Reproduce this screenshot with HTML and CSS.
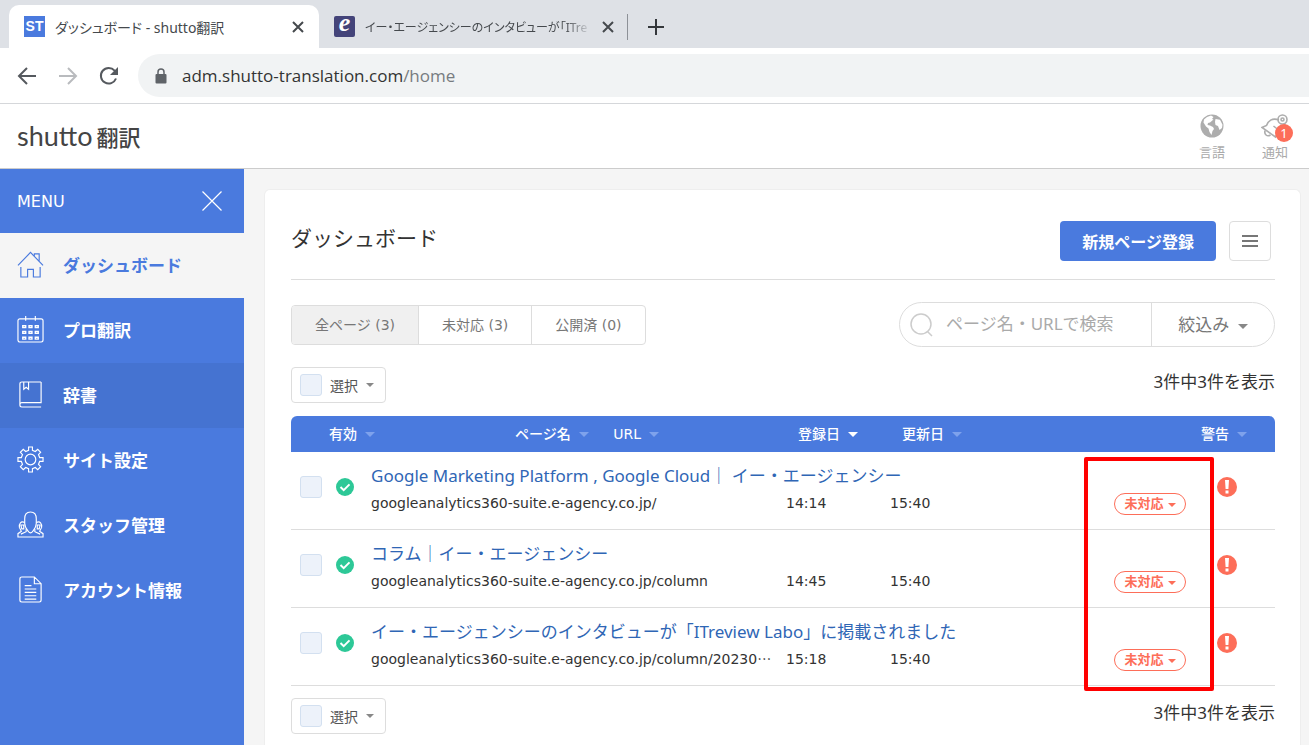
FILE: index.html
```
<!DOCTYPE html>
<html lang="ja">
<head>
  <meta charset="UTF-8">
  <meta name="viewport" content="width=device-width, initial-scale=1.0">
  <title>ダッシュボード - shutto翻訳</title>
  <link rel="stylesheet" href="styles.css">
</head>

<body>
  <!-- ブラウザ -->
  <div class="browser">
    <div class="tabs">
      <div class="tab active">
        <span class="favicon st">ST</span>
        <span class="tab-title">ダッシュボード - shutto翻訳</span>
        <button class="tab-close" aria-label="タブを閉じる"><svg width="12" height="12" viewBox="0 0 12 12"><path d="M1 1l10 10M11 1L1 11"/></svg></button>
      </div>
      <div class="tab">
        <span class="favicon ea">e</span>
        <span class="tab-title fade">イー・エージェンシーのインタビューが「ITre</span>
        <button class="tab-close" aria-label="タブを閉じる"><svg width="12" height="12" viewBox="0 0 12 12"><path d="M1 1l10 10M11 1L1 11"/></svg></button>
      </div>
      <button class="tab-new" aria-label="新しいタブ"><svg width="16" height="16" viewBox="0 0 16 16"><path d="M8 0v16M0 8h16"/></svg></button>
    </div>
    <div class="toolbar">
      <button aria-label="戻る"><svg width="20" height="20" viewBox="0 0 20 20"><path d="M19 10H2M10 2l-8 8 8 8"/></svg></button>
      <button class="disabled" aria-label="進む"><svg width="20" height="20" viewBox="0 0 20 20"><path d="M1 10h17M10 2l8 8-8 8"/></svg></button>
      <button aria-label="再読み込み"><svg width="20" height="20" viewBox="0 0 20 20"><path d="M17 12.5A7.8 7.8 0 1 1 15.6 4.6l1.4 1.6"/><path class="solid" d="M19 1v8h-8z"/></svg></button>
      <div class="address">
        <svg width="12" height="16" viewBox="0 0 12 16"><rect x="0.5" y="6" width="11" height="9.5" rx="1" fill="#5f6368"/><path d="M3 6V4a3 3 0 0 1 6 0v2" fill="none" stroke="#5f6368" stroke-width="1.5"/></svg>
        <span>adm.shutto-translation.com<span class="path">/home</span></span>
      </div>
    </div>
  </div>

  <header class="header">
    <a href="#" class="logo">shutto<span>翻訳</span></a>
    <div class="header-menu">
      <button>
        <svg width="24" height="24" viewBox="0 0 24 24"><circle cx="12" cy="12" r="11.5" fill="#adadad"/><path fill="#fff" d="M4 5.500L7 3l4-1.500 2.500 1.500-1.500 2 1.500.5-3.500 3-2 .5L7.500 11l2.500.5 3 1.500 1 2-1.500 2-1 4-2-3-1-3.500L6 12.500 3.500 8.500zM15.500 5l4.500.8 2.500 5-.5 3.200-2.500 2-1.500-4-2.500-1-.5-3z"/></svg>
        <span>言語</span>
      </button>
      <button class="notice">
        <svg width="28" height="26" viewBox="0 0 28 26" fill="none" stroke="#adadad" stroke-width="1.6"><circle cx="21.500" cy="5.500" r="4.500"/><circle cx="21.500" cy="5.500" r="1.500"/><path d="M18 6C11 3.500 7 7 5.500 11.500L1 13.500l13.500 9.500 2-3M12.500 12l5 4M24 9.500l-1 7"/><path d="M4 16.500c-1 4 2 6.500 5.500 4.500"/></svg>
        <span>通知</span>
        <span class="badge">1</span>
      </button>
    </div>
  </header>

  <div class="layout">
    <nav class="sidebar">
      <div class="menu-title">MENU
        <button aria-label="メニューを閉じる"><svg width="20" height="20" viewBox="0 0 20 20"><path d="M0.500.5l19 19M19.500.5l-19 19"/></svg></button>
      </div>
      <a href="#" class="current">
        <svg viewBox="0 0 28 28"><path d="M1 15L14 1.500 27 15M4 16.500V27h7v-8h6v8h7V16.500M18 5V3h5v7"/></svg>
        ダッシュボード</a>
      <a href="#">
        <svg viewBox="0 0 28 28"><rect x="1" y="3" width="26" height="24" rx="2"/><path d="M9 0v5M19 0v5"/><g stroke-width="1.5"><path d="M6 10h3v2H6zM12.500 10h3v2h-3zM19 10h3v2h-3zM6 16h3v2H6zM12.500 16h3v2h-3zM19 16h3v2h-3zM6 22h3v2H6zM12.500 22h3v2h-3zM19 22h3v2h-3z"/></g></svg>
        プロ翻訳</a>
      <a href="#" class="hover">
        <svg viewBox="0 0 28 28"><path d="M25 1H5a2 2 0 0 0-2 2v22a2 2 0 0 0 2 2h20M25 1v21.500H5a2 2 0 0 0-2 2M7 1v7.500l2.500-2 2.500 2V1"/></svg>
        辞書</a>
      <a href="#">
        <svg viewBox="0 0 28 28"><circle cx="14" cy="14" r="5.500"/><path d="M12 1h4v3.500l3 1.200L21.500 3.500l3 3L22.300 9l1.200 3H27v4h-3.500l-1.200 3 2.200 2.500-3 3L19 22.300l-3 1.200V27h-4v-3.500l-3-1.200-2.500 2.200-3-3L5.700 19l-1.200-3H1v-4h3.500l1.200-3-2.200-2.500 3-3L9 5.700l3-1.200z"/></svg>
        サイト設定</a>
      <a href="#">
        <svg viewBox="0 0 28 28"><path d="M14 1C9.500 1 8 4 8 8v5c0 4 3 7 4 8.500 1 1.500 3 1.500 4 0 1-1.500 4-4.500 4-8.500V8c0-4-1.500-7-6-7z"/><path d="M8 12c-4-2-6 1-5.500 5l2 4L1 23.500V27h26v-3.500L23.500 21l2-4c.5-4-1.500-7-5.500-5M9.500 18.500v3L4 24M18.500 18.500v3L24 24"/><path d="M4 14.500h3v4H5zM24 14.500h-3v4h2z"/></svg>
        スタッフ管理</a>
      <a href="#">
        <svg viewBox="0 0 28 28"><path d="M18 1H5a2 2 0 0 0-2 2v22a2 2 0 0 0 2 2h18a2 2 0 0 0 2-2V8zM18 1v7h7M8 10h7M8 13.500h12M8 17h12M8 20.500h12M8 24h12"/></svg>
        アカウント情報</a>
    </nav>

    <main class="main">
      <div class="panel">
        <div class="panel-head">
          <h1>ダッシュボード</h1>
          <button class="btn-primary">新規ページ登録</button>
          <button class="btn-menu" aria-label="メニュー"><svg width="16" height="12" viewBox="0 0 16 12"><path d="M0 1h16M0 6h16M0 11h16"/></svg></button>
        </div>

        <div class="filters">
          <div class="segment">
            <button class="on">全ページ (3)</button>
            <button>未対応 (3)</button>
            <button>公開済 (0)</button>
          </div>
          <form class="search">
            <label for="q"><svg width="24" height="24" viewBox="0 0 24 24"><circle cx="11" cy="11" r="10"/><path d="M17.500 18.500L22 23"/></svg></label>
            <input type="text" id="q" aria-label="検索" placeholder="ページ名・URLで検索">
            <button type="button">絞込み <i class="caret"></i></button>
          </form>
        </div>

        <div class="selection">
          <div class="select-box">
            <input type="checkbox" id="all-top">
            <label for="all-top">選択</label>
            <i class="caret"></i>
          </div>
          <span>3件中3件を表示</span>
        </div>

        <div class="table-wrap">
          <table>
            <colgroup>
              <col class="col-check">
              <col class="col-valid">
              <col class="col-page">
              <col class="col-date">
              <col>
              <col class="col-status">
              <col class="col-warn">
            </colgroup>
            <thead>
              <tr>
                <th></th>
                <th>有効 <i class="caret"></i></th>
                <th class="th-page">ページ名 <i class="caret"></i><span class="th-url">URL <i class="caret"></i></span></th>
                <th class="th-date">登録日 <i class="caret sorted"></i></th>
                <th class="th-date">更新日 <i class="caret"></i></th>
                <th></th>
                <th>警告 <i class="caret"></i></th>
              </tr>
            </thead>
            <tbody>
              <tr>
                <td class="mark check"><input type="checkbox" aria-label="選択"></td>
                <td class="mark valid"><svg width="18" height="18" viewBox="0 0 18 18"><circle cx="9" cy="9" r="9" fill="#2dc897"/><path d="M4.500 9l3.200 3.200 5.800-5.800" fill="none" stroke="#fff" stroke-width="2"/></svg></td>
                <td class="page"><a href="#">Google Marketing Platform , Google Cloud｜ イー・エージェンシー</a>googleanalytics360-suite.e-agency.co.jp/</td>
                <td>14:14</td>
                <td>15:40</td>
                <td class="status"><button>未対応 <i class="caret"></i></button></td>
                <td class="mark warn"><svg width="20" height="20" viewBox="0 0 20 20"><circle cx="10" cy="10" r="10" fill="#fd6e59"/><path d="M8 3h4l-.6 9H8.600zM8.500 13.500h3v3h-3z" fill="#fff"/></svg></td>
              </tr>
              <tr>
                <td class="mark check"><input type="checkbox" aria-label="選択"></td>
                <td class="mark valid"><svg width="18" height="18" viewBox="0 0 18 18"><circle cx="9" cy="9" r="9" fill="#2dc897"/><path d="M4.500 9l3.200 3.200 5.800-5.800" fill="none" stroke="#fff" stroke-width="2"/></svg></td>
                <td class="page"><a href="#">コラム｜イー・エージェンシー</a>googleanalytics360-suite.e-agency.co.jp/column</td>
                <td>14:45</td>
                <td>15:40</td>
                <td class="status"><button>未対応 <i class="caret"></i></button></td>
                <td class="mark warn"><svg width="20" height="20" viewBox="0 0 20 20"><circle cx="10" cy="10" r="10" fill="#fd6e59"/><path d="M8 3h4l-.6 9H8.600zM8.500 13.500h3v3h-3z" fill="#fff"/></svg></td>
              </tr>
              <tr>
                <td class="mark check"><input type="checkbox" aria-label="選択"></td>
                <td class="mark valid"><svg width="18" height="18" viewBox="0 0 18 18"><circle cx="9" cy="9" r="9" fill="#2dc897"/><path d="M4.500 9l3.200 3.200 5.800-5.800" fill="none" stroke="#fff" stroke-width="2"/></svg></td>
                <td class="page"><a href="#">イー・エージェンシーのインタビューが「ITreview Labo」に掲載されました</a>googleanalytics360-suite.e-agency.co.jp/column/20230<span class="more">…</span></td>
                <td>15:18</td>
                <td>15:40</td>
                <td class="status"><button>未対応 <i class="caret"></i></button></td>
                <td class="mark warn"><svg width="20" height="20" viewBox="0 0 20 20"><circle cx="10" cy="10" r="10" fill="#fd6e59"/><path d="M8 3h4l-.6 9H8.600zM8.500 13.500h3v3h-3z" fill="#fff"/></svg></td>
              </tr>
            </tbody>
          </table>
          <div class="highlight"></div>
        </div>

        <div class="selection">
          <div class="select-box">
            <input type="checkbox" id="all-bottom">
            <label for="all-bottom">選択</label>
            <i class="caret"></i>
          </div>
          <span>3件中3件を表示</span>
        </div>
      </div>
    </main>
  </div>
</body>

</html>
```
FILE: styles.css
```
* {
  box-sizing: border-box;
}
body {
  margin: 0;
  min-height: 100vh;
  display: flex;
  flex-direction: column;
  font-family: "Noto Sans", "Noto Sans CJK JP", sans-serif;
  font-size: 17px;
  color: #333;
  background: #f5f5f5;
}
button, input {
  font-family: inherit;
}
button {
  padding: 0;
  border: 0;
  background: none;
  cursor: pointer;
}
a {
  text-decoration: none;
}
svg {
  display: block;
  flex-shrink: 0;
}

/* ブラウザ */
.browser {
  background: #fff;
  border-bottom: 1px solid #d5d7da;
}
.tabs {
  display: flex;
  align-items: stretch;
  height: 48px;
  padding: 5px 0 0 9px;
  background: #dee1e6;
}
.tab {
  display: flex;
  align-items: center;
  width: 310px;
  padding: 0 15px;
  gap: 10px;
  color: #45494d;
  font-size: 14px;
}
.tab.active {
  background: #fff;
  border-radius: 10px 10px 0 0;
}
.favicon {
  width: 21px;
  height: 21px;
  flex-shrink: 0;
  color: #fff;
  text-align: center;
}
.favicon.st {
  background: #4a7ade;
  font: bold 14px/21px "Liberation Sans", sans-serif;
}
.favicon.ea {
  background: #44447a;
  border-radius: 2px;
  font: italic bold 26px/14px "Liberation Serif", serif;
}
.tab-title {
  flex: 1;
  white-space: nowrap;
  font-feature-settings: "palt";
}
.tab-title.fade {
  font-size: 12px;
  -webkit-mask-image: linear-gradient(to right, #000 88%, transparent);
  mask-image: linear-gradient(to right, #000 88%, transparent);
}
.tab-close path {
  stroke: #45494d;
  stroke-width: 2;
}
.tab-new {
  align-self: center;
  height: 26px;
  padding: 0 20px;
  margin-left: -2px;
  border-left: 1px solid #8d9197;
}
.tab-new path {
  stroke: #34373b;
  stroke-width: 2;
}
.toolbar {
  display: flex;
  align-items: center;
  gap: 21px;
  padding: 6px 0 6px 17px;
}
.toolbar button path {
  fill: none;
  stroke: #55595e;
  stroke-width: 2;
}
.toolbar button .solid {
  fill: #55595e;
  stroke: none;
}
.toolbar .disabled path {
  stroke: #b9bbbe;
}
.address {
  flex: 1;
  display: flex;
  align-items: center;
  gap: 15px;
  height: 43px;
  margin-left: -2px;
  padding-left: 17px;
  border-radius: 22px 0 0 22px;
  background: #f1f3f4;
  font-family: "Open Sans", sans-serif;
  font-size: 17px;
}
.address .path {
  color: #777b80;
}

/* ヘッダー */
.header {
  display: flex;
  align-items: center;
  justify-content: space-between;
  height: 65px;
  padding: 0 20px 0 17px;
  background: #fff;
  border-bottom: 1px solid #ccc;
}
.logo {
  display: flex;
  align-items: baseline;
  gap: 4px;
  color: #444;
  font-family: Lato, sans-serif;
  font-size: 27px;
  line-height: 30px;
}
.logo span {
  font-family: "Noto Sans CJK JP", sans-serif;
  font-size: 22px;
  font-weight: 500;
}
.header-menu {
  display: flex;
  gap: 36px;
}
.header-menu button {
  position: relative;
  display: flex;
  flex-direction: column;
  align-items: center;
  justify-content: space-between;
  height: 48px;
  margin-top: 4px;
  color: #aaa;
  font-size: 13px;
  line-height: 20px;
}
.badge {
  position: absolute;
  top: 10px;
  right: -4px;
  width: 18px;
  height: 18px;
  border-radius: 9px;
  background: #fd6e59;
  color: #fff;
  font-size: 13px;
  line-height: 18px;
}

/* サイドバー */
.layout {
  flex: 1;
  display: flex;
}
.sidebar {
  width: 244px;
  flex-shrink: 0;
  background: #4a7ade;
}
.menu-title {
  display: flex;
  align-items: center;
  justify-content: space-between;
  height: 64px;
  padding: 0 22px 0 17px;
  color: #fff;
  font-family: "DejaVu Sans", sans-serif;
  font-size: 16px;
}
.menu-title path {
  stroke: #fff;
  stroke-width: 1.2;
}
.sidebar a {
  display: flex;
  align-items: center;
  gap: 19px;
  height: 65px;
  padding: 0 0 2px 17px;
  color: #fff;
  font-weight: bold;
}
.sidebar a svg {
  width: 27px;
  height: 27px;
  fill: none;
  stroke: currentColor;
  stroke-width: 1.2;
}
.sidebar .current {
  background: #f5f5f5;
  color: #4a7ade;
}
.sidebar .hover {
  background: #4573d1;
}

/* メイン */
.main {
  flex: 1;
  display: flex;
  padding: 20px 8px 0 20px;
}
.panel {
  flex: 1;
  min-width: 0;
  padding: 31px 25px 8px 26px;
  border: 1px solid #eee;
  border-bottom: 0;
  border-radius: 6px 6px 0 0;
  background: #fff;
}
.panel-head {
  display: flex;
  align-items: center;
  padding: 0 4px 18px 0;
  border-bottom: 1px solid #ddd;
}
h1 {
  flex: 1;
  margin: 0;
  padding-bottom: 6px;
  font-size: 21px;
  font-weight: normal;
  line-height: 34px;
}
.btn-primary {
  height: 40px;
  padding: 0 22px;
  border-radius: 4px;
  background: #4a7ade;
  color: #fff;
  font-size: 16px;
  font-weight: bold;
}
.btn-menu {
  display: flex;
  align-items: center;
  justify-content: center;
  width: 42px;
  height: 40px;
  margin-left: 13px;
  border: 1px solid #ddd;
  border-radius: 4px;
}
.btn-menu path {
  stroke: #777;
  stroke-width: 2;
}
.caret {
  display: inline-block;
  margin-left: 4px;
  border: 5px solid transparent;
  border-top-color: #888;
  border-bottom: 0;
  vertical-align: middle;
}
.filters {
  display: flex;
  align-items: center;
  justify-content: space-between;
  margin-top: 22px;
}
.segment {
  display: flex;
  border: 1px solid #ddd;
  border-radius: 4px;
  overflow: hidden;
}
.segment button {
  height: 38px;
  padding: 0 23px 2px;
  color: #777;
  font-family: "DejaVu Sans", "Noto Sans CJK JP", sans-serif;
  font-size: 14px;
}
.segment button + button {
  border-left: 1px solid #ddd;
}
.segment .on {
  background: #f0f0f0;
}
.search {
  display: flex;
  align-items: center;
  width: 376px;
  height: 45px;
  padding-left: 10px;
  border: 1px solid #ddd;
  border-radius: 23px;
}
.search svg {
  fill: none;
  stroke: #ccc;
  stroke-width: 1.5;
}
.search input {
  flex: 1;
  min-width: 0;
  padding: 0 0 2px 12px;
  border: 0;
  outline: 0;
  background: none;
  font-size: 17px;
}
.search input::placeholder {
  color: #aaa;
}
.search button {
  width: 123px;
  height: 43px;
  padding-bottom: 2px;
  border-left: 1px solid #ddd;
  color: #777;
  font-size: 17px;
}
.selection {
  display: flex;
  justify-content: space-between;
  margin-top: 20px;
}
.table-wrap + .selection {
  margin-top: 12px;
}
.selection > span {
  line-height: 30px;
}
.select-box {
  display: flex;
  align-items: center;
  gap: 8px;
  height: 36px;
  padding: 0 11px 0 8px;
  border: 1px solid #ddd;
  border-radius: 4px;
  color: #555;
  font-size: 14px;
}
.select-box .caret {
  margin-left: 0;
  border-width: 4px;
  border-bottom: 0;
}
input[type="checkbox"] {
  appearance: none;
  display: block;
  width: 22px;
  height: 22px;
  margin: 0;
  border: 1px solid #d3e0f0;
  border-radius: 3px;
  background: #edf2fa;
}

/* 一覧 */
.table-wrap {
  position: relative;
  margin-top: 13px;
}
table {
  width: 100%;
  table-layout: fixed;
  border-collapse: separate;
  border-spacing: 0;
  font-family: "DejaVu Sans", "Noto Sans CJK JP", sans-serif;
  font-size: 14px;
}
.col-check {
  width: 38px;
}
.col-valid {
  width: 42px;
}
.col-page {
  width: 415px;
}
.col-date {
  width: 104px;
}
.col-status {
  width: 160px;
}
.col-warn {
  width: 74px;
}
th {
  height: 36px;
  padding: 0 0 3px;
  background: #4a7ade;
  color: #fff;
  font-weight: 500;
  text-align: left;
  white-space: nowrap;
}
th:first-child {
  border-radius: 6px 0 0 0;
}
th:last-child {
  border-radius: 0 6px 0 0;
}
th .caret {
  border-top-color: #7ea2ec;
}
th .caret.sorted {
  border-top-color: #fff;
}
.th-page {
  padding-left: 144px;
}
.th-url {
  margin-left: 24px;
}
.th-date {
  padding-left: 12px;
}
td {
  padding: 12px 0 11px;
  border-bottom: 1px solid #ddd;
  line-height: 30px;
  vertical-align: bottom;
  white-space: nowrap;
}
.page a {
  display: block;
  color: #2f66b5;
  font-family: "Noto Sans", "Noto Sans CJK JP", sans-serif;
  font-size: 17px;
  line-height: 24px;
}
.more {
  font-family: "Noto Sans CJK JP", sans-serif;
  line-height: 20px;
}
.mark {
  padding: 0 0 7px;
  vertical-align: middle;
}
.check {
  padding-left: 9px;
}
.valid {
  padding-left: 7px;
}
.warn {
  padding-left: 16px;
}
.status {
  text-align: right;
  padding-right: 15px;
}
.status button {
  height: 22px;
  padding: 0 9px;
  border: 1px solid #fd6e59;
  border-radius: 11px;
  color: #fd6e59;
  font-size: 13px;
  font-weight: bold;
  line-height: 20px;
  vertical-align: middle;
}
.status .caret {
  margin-left: 0;
  border-width: 4px;
  border-bottom: 0;
  border-top-color: #fd6e59;
}
.highlight {
  position: absolute;
  top: 41px;
  right: 61px;
  width: 130px;
  height: 234px;
  border: 4px solid #f00;
  border-radius: 2px;
  pointer-events: none;
}
```
